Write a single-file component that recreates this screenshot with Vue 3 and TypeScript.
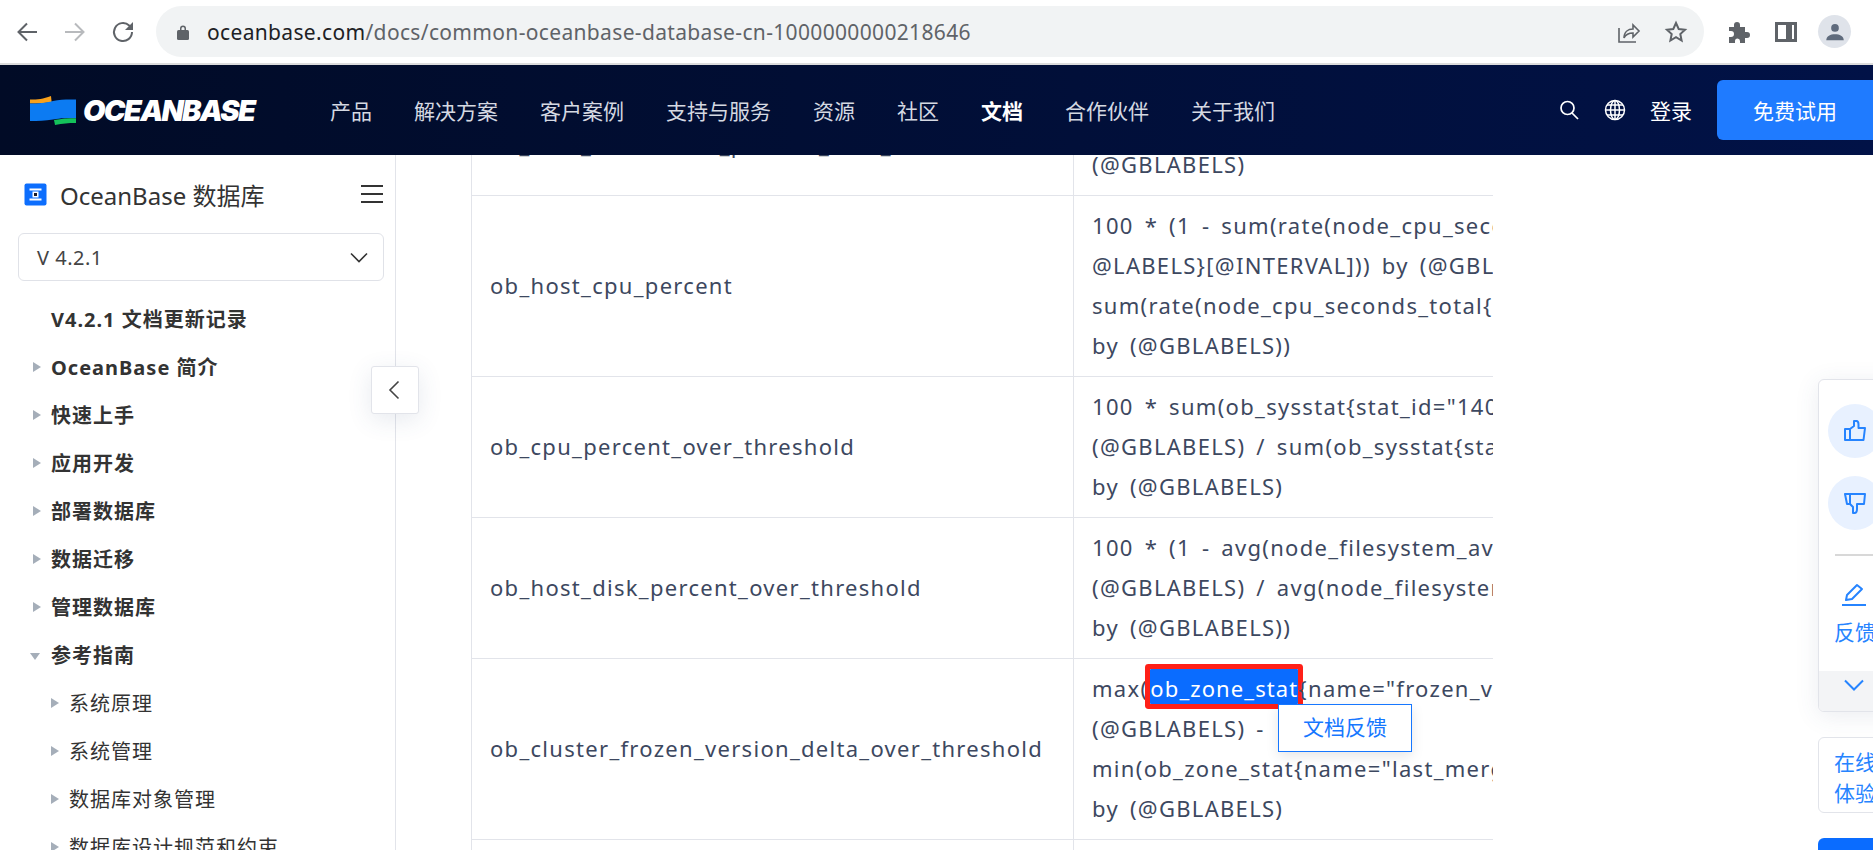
<template>
  <div class="page">
    <!-- browser bar -->
    <div class="browser-bar">
      <div class="browser-nav">
        <svg class="bicon" viewBox="0 0 24 24" fill="none" stroke="#5f6368" stroke-width="2"><path d="M22 12H4M12 3.500l-8.500 8.500 8.500 8.500"/></svg>
        <svg class="bicon" viewBox="0 0 24 24" fill="none" stroke="#b8babd" stroke-width="2"><path d="M2 12h18M12 3.500l8.500 8.500-8.500 8.500"/></svg>
        <svg class="bicon" viewBox="0 0 24 24" fill="none" stroke="#5f6368" stroke-width="2"><path d="M21 12a9 9 0 1 1-2.800-6.500L21 8"/><path d="M22 2v8h-8" fill="#5f6368" stroke="none"/></svg>
      </div>
      <div class="url-bar">
        <svg class="lock" viewBox="0 0 12 16"><path d="M3 7V4.500a3 3 0 0 1 6 0V7h-1.500V4.500a1.500 1.500 0 0 0-3 0V7z" fill="#5f6368"/><rect x="0" y="6" width="12" height="10" rx="1.500" fill="#5f6368"/></svg>
        <span class="url"><span class="url-host">oceanbase.com</span>/docs/common-oceanbase-database-cn-1000000000218646</span>
        <div class="url-actions">
          <svg class="bicon" viewBox="0 0 24 24" fill="none" stroke="#5f6368" stroke-width="1.600"><path d="M2 8v14h17"/><path d="M7 18c0-6 4-9 9-9V5l6 6-6 6v-4c-4 0-7 1-9 5z"/></svg>
          <svg class="bicon" viewBox="0 0 24 24" fill="none" stroke="#5f6368" stroke-width="2"><path d="M12 3l2.700 6 6.300.7-4.700 4.300 1.300 6.500-5.600-3.300-5.600 3.300 1.300-6.500L3 9.700 9.300 9z"/></svg>
        </div>
      </div>
      <div class="browser-ext">
        <svg class="bicon" viewBox="0 0 24 24" fill="#5f6368"><path d="M3 7h5V5a3 3 0 0 1 6 0v2h5v5h2a3 3 0 0 1 0 6h-2v5h-5v-2a2.500 2.500 0 0 0-5 0v2H3v-6h2a3 3 0 0 0 0-6H3z"/></svg>
        <svg class="bicon" viewBox="0 0 24 24" fill="none" stroke="#5f6368" stroke-width="3"><rect x="2.500" y="3.500" width="19" height="17"/><path d="M15 3v18" stroke-width="6"/></svg>
        <div class="avatar">
          <svg viewBox="0 0 24 24" fill="#5f6b7d"><circle cx="12" cy="7.500" r="4.200"/><path d="M2.500 21c0-4.500 4.500-6.500 9.500-6.500s9.500 2 9.500 6.500z"/></svg>
        </div>
      </div>
    </div>

    <!-- site nav -->
    <header class="site-nav">
      <div class="logo">
        <svg class="logo-flag" viewBox="0 0 46 29">
          <path d="M0 3.500c8 0 13-.5 21-3.500l.7 6.500C14 7 8 7.500 0 7.500z" fill="#f9a11b"/>
          <path d="M0 7.500c9 0 15-.4 23-2.500 8-1.800 15-1.500 23-1.500V22c-9 0-15 0-23 1.500-8 1.500-15 1.500-23 1.500z" fill="#0c7bf2"/>
          <path d="M24 24c8-1.500 14-1.800 22-1.800V27c-8 0-13 .5-21 2z" fill="#14c25a"/>
        </svg>
        <span class="logo-text">OCEANBASE</span>
      </div>
      <nav class="nav-links">
        <a v-for="item in navLinks" :key="item" :class="{ active: item === '文档' }">{{ item }}</a>
      </nav>
      <div class="nav-right">
        <svg class="nav-icon" viewBox="0 0 22 22" fill="none" stroke="#fff" stroke-width="1.700"><circle cx="9.500" cy="9" r="6.500"/><path d="M14 14l6 6"/></svg>
        <svg class="nav-icon" viewBox="0 0 22 22" fill="none" stroke="#fff" stroke-width="1.500"><circle cx="11" cy="11" r="9.500"/><ellipse cx="11" cy="11" rx="4.500" ry="9.500"/><path d="M11 1.500v19M1.500 11h19M3 6h16M3 16h16"/></svg>
        <span class="login">登录</span>
        <button class="try-btn">免费试用</button>
      </div>
    </header>

    <div class="body">
      <!-- sidebar -->
      <aside class="sidebar">
        <div class="side-head">
          <svg class="prod-icon" viewBox="0 0 23 23"><rect x="0.500" y="0.500" width="22" height="22" rx="2" fill="#0d6efd"/><path d="M5.500 6.500h12M5.500 16.500h12" stroke="#fff" stroke-width="2.200"/><rect x="8.500" y="8.500" width="6" height="6" fill="#fff"/><rect x="10" y="10" width="3" height="3" fill="#1a1a2a"/></svg>
          <span class="prod-name">OceanBase 数据库</span>
          <svg class="burger" viewBox="0 0 22 20" stroke="#333" stroke-width="2"><path d="M0 2h22M0 10h22M0 18h22"/></svg>
        </div>
        <div class="version">
          <span>V 4.2.1</span>
          <svg viewBox="0 0 18 11" fill="none" stroke="#333" stroke-width="1.600"><path d="M1 1.500l8 8 8-8"/></svg>
        </div>
        <ul class="tree">
          <li v-for="n in tree" :key="n.label" :class="{ sub: n.sub }">
            <i v-if="n.arrow" class="arrow" :class="n.arrow"></i>
            <span>{{ n.label }}</span>
          </li>
        </ul>
      </aside>

      <!-- doc content -->
      <main class="main">
        <div class="table-wrap">
          <table class="doc-table">
            <colgroup><col class="c1" /><col class="c2" /></colgroup>
            <tbody>
              <tr>
                <td>ob_host_connection_percent_over_threshold</td>
                <td>&nbsp;<br />(@GBLABELS)</td>
              </tr>
              <tr>
                <td>ob_host_cpu_percent</td>
                <td>100 * (1 - sum(rate(node_cpu_seconds_total{mode="idle",<br />@LABELS}[@INTERVAL])) by (@GBLABELS) /<br />sum(rate(node_cpu_seconds_total{@LABELS}[@INTERVAL]))<br />by (@GBLABELS))</td>
              </tr>
              <tr>
                <td>ob_cpu_percent_over_threshold</td>
                <td>100 * sum(ob_sysstat{stat_id="140006",@LABELS}) by<br />(@GBLABELS) / sum(ob_sysstat{stat_id="140005",@LABELS})<br />by (@GBLABELS)</td>
              </tr>
              <tr>
                <td>ob_host_disk_percent_over_threshold</td>
                <td>100 * (1 - avg(node_filesystem_avail_bytes{@LABELS}) by<br />(@GBLABELS) / avg(node_filesystem_size_bytes{@LABELS})<br />by (@GBLABELS))</td>
              </tr>
              <tr>
                <td>ob_cluster_frozen_version_delta_over_threshold</td>
                <td class="has-pop">max(<span class="hl">ob_zone_stat</span>{name="frozen_version",@LABELS}) by<br />(@GBLABELS) - <br />min(ob_zone_stat{name="last_merged_version",@LABELS})<br />by (@GBLABELS)
                  <div class="feedback-pop">文档反馈</div>
                </td>
              </tr>
              <tr><td>&nbsp;</td><td>&nbsp;</td></tr>
            </tbody>
          </table>
        </div>
      </main>

      <button class="collapse">
        <svg viewBox="0 0 12 20" fill="none" stroke="#444" stroke-width="1.600"><path d="M10.500 1.500L2 10l8.500 8.500"/></svg>
      </button>
    </div>

    <!-- right floating widgets -->
    <div class="float-panel">
      <div class="circle">
        <svg viewBox="0 0 24 24" fill="none" stroke="#2684ff" stroke-width="2" stroke-linejoin="round"><path d="M7 10v11H2V10zM7 10l4-3V2h2.500c1.500 0 2 2 2 3.500V9H22l-1.500 12H7"/></svg>
      </div>
      <div class="circle">
        <svg viewBox="0 0 24 24" fill="none" stroke="#2684ff" stroke-width="2" stroke-linejoin="round"><path d="M2 3h20l-1 10h-7v5c0 2-1 4-2.500 4H10v-6l-3-3H4z"/><path d="M7 3v10"/></svg>
      </div>
      <div class="panel-sep"></div>
      <div class="feedback">
        <svg viewBox="0 0 24 24" fill="none" stroke="#2684ff" stroke-width="2" stroke-linejoin="round"><path d="M4 18l1-5L15 3l5 4-10 10z"/><path d="M0 23h24"/></svg>
        <span>反馈</span>
      </div>
      <div class="panel-foot">
        <svg viewBox="0 0 20 12" fill="none" stroke="#2684ff" stroke-width="2"><path d="M1 1.500l9 9 9-9"/></svg>
      </div>
    </div>
    <div class="float-try">在线<br />体验</div>
    <div class="float-blue"></div>
  </div>
</template>

<script setup lang="ts">
interface TreeNode {
  label: string
  arrow?: 'right' | 'down'
  sub?: boolean
}

const navLinks = ['产品', '解决方案', '客户案例', '支持与服务', '资源', '社区', '文档', '合作伙伴', '关于我们']

const tree: TreeNode[] = [
  { label: 'V4.2.1 文档更新记录' },
  { label: 'OceanBase 简介', arrow: 'right' },
  { label: '快速上手', arrow: 'right' },
  { label: '应用开发', arrow: 'right' },
  { label: '部署数据库', arrow: 'right' },
  { label: '数据迁移', arrow: 'right' },
  { label: '管理数据库', arrow: 'right' },
  { label: '参考指南', arrow: 'down' },
  { label: '系统原理', arrow: 'right', sub: true },
  { label: '系统管理', arrow: 'right', sub: true },
  { label: '数据库对象管理', arrow: 'right', sub: true },
  { label: '数据库设计规范和约束', arrow: 'right', sub: true }
]
</script>

<style>
html,
body {
  margin: 0;
  overflow: hidden;
  background: #fff;
}
</style>

<style scoped>
.page {
  position: relative;
  width: 1873px;
  height: 850px;
  overflow: hidden;
  display: flex;
  flex-direction: column;
  font-family: "Noto Sans", "Noto Sans CJK SC", sans-serif;
  color: #3b4558;
}

.browser-bar {
  flex: none;
  height: 63px;
  display: flex;
  align-items: center;
  background: #fff;
  border-bottom: 2px solid #dcdcdc;
}

.browser-nav {
  display: flex;
  gap: 24px;
  padding-left: 15px;
  width: 141px;
}

.bicon {
  width: 24px;
  height: 24px;
  flex: none;
}

.url-bar {
  width: 1548px;
  height: 51px;
  border-radius: 26px;
  background: #f1f3f4;
  display: flex;
  align-items: center;
  padding: 0 16px 0 21px;
  box-sizing: border-box;
}

.lock {
  width: 12px;
  height: 16px;
  margin-right: 18px;
}

.url {
  font-size: 21px;
  letter-spacing: 0.34px;
  color: #5f6368;
  white-space: nowrap;
  flex: 1;
}

.url-host {
  color: #202124;
}

.url-actions {
  display: flex;
  gap: 23px;
}

.browser-ext {
  display: flex;
  align-items: center;
  gap: 24px;
  margin-left: 22px;
}

.avatar {
  width: 33px;
  height: 33px;
  border-radius: 50%;
  background: #dfe3ea;
  display: flex;
  align-items: center;
  justify-content: center;
  margin-left: -4px;
}

.avatar svg {
  width: 22px;
  height: 22px;
}

.site-nav {
  flex: none;
  height: 90px;
  display: flex;
  align-items: center;
  background: linear-gradient(90deg, #010b26 0%, #011247 100%);
  color: #d5d9e2;
}

.logo {
  display: flex;
  align-items: center;
  gap: 7px;
  margin-left: 30px;
  width: 300px;
}

.logo-flag {
  width: 46px;
  height: 29px;
}

.logo-text {
  font-family: Inter, sans-serif;
  font-weight: 900;
  font-style: italic;
  font-size: 29px;
  letter-spacing: -1.7px;
  color: #fff;
}

.nav-links {
  display: flex;
  gap: 42px;
  flex: 1;
  font-size: 21px;
}

.nav-links a.active {
  color: #fff;
  font-weight: 700;
}

.nav-right {
  display: flex;
  align-items: center;
}

.nav-icon {
  width: 22px;
  height: 22px;
  margin-right: 24px;
}

.login {
  font-size: 21px;
  color: #fff;
  margin-right: 25px;
}

.try-btn {
  width: 156px;
  height: 60px;
  border: none;
  border-radius: 6px 0 0 6px;
  background: #1f7bff;
  color: #fff;
  font-family: inherit;
  font-size: 21px;
}

.body {
  position: relative;
  flex: 1;
  display: flex;
  min-height: 0;
}

.sidebar {
  flex: none;
  border-right: 1px solid #e2e4ea;
  overflow: hidden;
  padding: 0 11px 0 18px;
  width: 366px;
}

.side-head {
  display: flex;
  align-items: center;
  height: 38px;
  margin-top: 20px;
}

.prod-icon {
  width: 23px;
  height: 23px;
  margin-left: 6px;
}

.prod-name {
  font-size: 24px;
  color: #333;
  margin-left: 13px;
  flex: 1;
}

.burger {
  width: 22px;
  height: 20px;
  margin-right: 1px;
}

.version {
  height: 48px;
  margin-top: 20px;
  border: 1px solid #e0e2e8;
  border-radius: 6px;
  display: flex;
  align-items: center;
  justify-content: space-between;
  padding: 0 15px 0 18px;
  font-size: 20px;
  letter-spacing: 0.5px;
  color: #444;
  box-sizing: border-box;
}

.version svg {
  width: 18px;
  height: 11px;
}

.tree {
  list-style: none;
  margin: 15px 0 0;
  padding: 0;
}

.tree li {
  position: relative;
  height: 48px;
  line-height: 48px;
  padding-left: 33px;
  font-size: 20px;
  letter-spacing: 1px;
  font-weight: 700;
  color: #333;
  white-space: nowrap;
}

.tree li.sub {
  padding-left: 51px;
  font-weight: 400;
}

.arrow {
  position: absolute;
  left: 15px;
  top: 18px;
  width: 0;
  height: 0;
}

.arrow.right {
  border-left: 8px solid #a5aeb9;
  border-top: 5.500px solid transparent;
  border-bottom: 5.500px solid transparent;
}

.arrow.down {
  left: 12px;
  top: 21px;
  border-top: 7px solid #a5aeb9;
  border-left: 5.500px solid transparent;
  border-right: 5.500px solid transparent;
}

.sub .arrow {
  left: 33px;
}

.main {
  flex: 1;
  min-width: 0;
  overflow: hidden;
  padding-left: 75px;
}

.table-wrap {
  width: 1022px;
  overflow: hidden;
  margin-top: -61px;
}

.doc-table {
  border-collapse: collapse;
  table-layout: fixed;
  width: 1500px;
  font-size: 22px;
  line-height: 40px;
  letter-spacing: 1.3px;
  word-spacing: 4px;
  color: #3d4860;
}

.c1 {
  width: 602px;
}

.doc-table td {
  border: 1px solid #e2e4ea;
  padding: 9px 18px 11px;
  white-space: nowrap;
  vertical-align: middle;
}

.has-pop {
  position: relative;
}

.hl {
  margin-left: 2px;
  background: #0a6cff;
  color: #fff;
  padding: 4px 0 1px;
  border-radius: 1px;
  letter-spacing: 1.1px;
  box-shadow: 0 0 0 5px #ff2018;
}

.feedback-pop {
  position: absolute;
  left: 204px;
  top: 45px;
  width: 132px;
  height: 46px;
  line-height: 44px;
  border: 1px solid #1677ff;
  background: #fff;
  color: #1677ff;
  text-align: center;
  letter-spacing: 0;
  font-size: 21px;
  box-shadow: 0 4px 12px rgba(0, 0, 0, 0.1);
}

.collapse {
  position: absolute;
  left: 371px;
  top: 211px;
  width: 48px;
  height: 48px;
  padding: 0;
  background: #fff;
  border: 1px solid #e2e4ea;
  border-radius: 3px;
  box-shadow: 0 6px 24px rgba(60, 80, 120, 0.12);
  display: flex;
  align-items: center;
  justify-content: center;
}

.collapse svg {
  width: 12px;
  height: 20px;
  margin-left: -2px;
}

.float-panel {
  position: absolute;
  left: 1818px;
  top: 379px;
  width: 90px;
  height: 333px;
  box-sizing: border-box;
  padding: 0 0 0 9px;
  border: 1px solid #e2e4ea;
  border-radius: 6px;
  background: #fff;
  box-shadow: 0 4px 24px rgba(60, 80, 120, 0.1);
  overflow: hidden;
  font-size: 21px;
  color: #2684ff;
}

.circle {
  width: 54px;
  height: 54px;
  border-radius: 50%;
  background: #e8f1ff;
  margin-top: 24px;
  display: flex;
  align-items: center;
  justify-content: center;
}

.circle + .circle {
  margin-top: 18px;
}

.circle svg {
  width: 24px;
  height: 24px;
}

.panel-sep {
  height: 2px;
  background: #d8d8d8;
  margin: 24px 0 0 7px;
}

.feedback {
  padding-left: 6px;
  margin-top: 26px;
}

.feedback svg {
  display: block;
  width: 24px;
  height: 24px;
  margin-left: 8px;
}

.feedback span {
  display: block;
  margin-top: 10px;
  line-height: 32px;
}

.panel-foot {
  position: absolute;
  left: 0;
  right: 0;
  bottom: 0;
  height: 40px;
  background: #f3f4f6;
}

.panel-foot svg {
  display: block;
  width: 20px;
  height: 12px;
  margin: 8px 0 0 25px;
}

.float-try {
  position: absolute;
  left: 1818px;
  top: 737px;
  width: 90px;
  height: 76px;
  box-sizing: border-box;
  padding: 9px 0 0 15px;
  border: 1px solid #e2e4ea;
  border-radius: 6px;
  background: #fff;
  font-size: 21px;
  line-height: 31px;
  color: #2684ff;
}

.float-blue {
  position: absolute;
  left: 1818px;
  top: 838px;
  width: 90px;
  height: 40px;
  border-radius: 6px 0 0 0;
  background: #0a6cff;
}
</style>
